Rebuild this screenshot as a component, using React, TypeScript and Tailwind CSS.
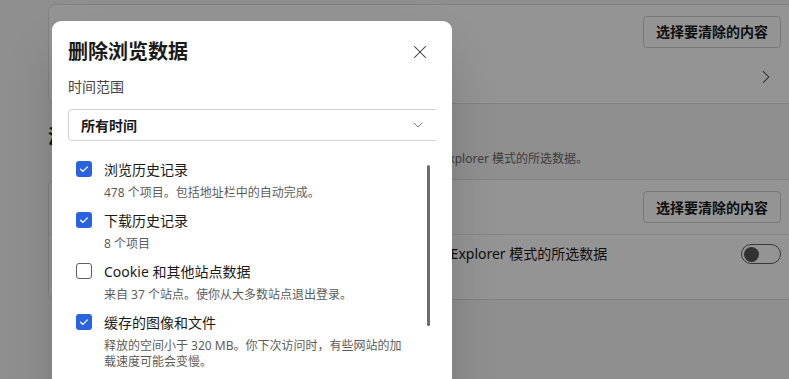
import { X, ChevronDown, ChevronRight } from "lucide-react";

const ITEMS = [
  { label: "浏览历史记录", desc: "478 个项目。包括地址栏中的自动完成。", checked: true },
  { label: "下载历史记录", desc: "8 个项目", checked: true },
  { label: "Cookie 和其他站点数据", desc: "来自 37 个站点。使你从大多数站点退出登录。", checked: false },
  { label: "缓存的图像和文件", desc: "释放的空间小于 320 MB。你下次访问时，有些网站的加载速度可能会变慢。", checked: true },
];

function Checkbox({ checked }: { checked: boolean }) {
  if (!checked) {
    return <div className="w-4 h-4 shrink-0 rounded-[3px] border border-[#5f5f5f] bg-white" />;
  }
  return (
    <div className="w-4 h-4 shrink-0 rounded-[3px] bg-[#2a63e0] flex items-center justify-center">
      <svg width="16" height="16" viewBox="0 0 16 16" fill="none">
        <path d="M4.6 8.3 L6.9 10.4 L11.4 5.9" stroke="white" strokeWidth="1.3" strokeLinecap="round" strokeLinejoin="round" />
      </svg>
    </div>
  );
}

function OutlineButton() {
  return (
    <button className="h-[32px] px-[12px] rounded-[4px] border border-[#d1d1d1] bg-white text-[14px] font-semibold text-[#1a1a1a]">
      选择要清除的内容
    </button>
  );
}

export default function App() {
  return (
    <div className="relative w-[789px] h-[379px] overflow-hidden bg-[#f7f7f7] font-['Noto_Sans','Noto_Sans_CJK_SC',sans-serif] text-[#1a1a1a]">
      {/* Settings page underneath */}
      <div className="pl-[48px] pt-[4px] flex flex-col">
        <div className="w-[753px] rounded-[8px] border border-[#e0e0e0] bg-white flex flex-col">
          <div className="h-[53px] px-[19px] flex items-center justify-between">
            <span className="text-[14px]">立即清除浏览数据</span>
            <OutlineButton />
          </div>
          <div className="h-[45px] pl-[19px] pr-[23px] pb-[7px] flex items-center justify-between">
            <span className="text-[14px]">选择每次关闭浏览器时要清除的内容</span>
            <ChevronRight className="w-[22px] h-[22px] text-[#333]" strokeWidth={1.1} />
          </div>
        </div>

        <div className="mt-[20px] text-[20px] leading-[26px] font-semibold">清除 Internet Explorer 的浏览数据</div>
        <div className="pl-[4px] text-[12px] leading-[18px] text-[#6b6b6b] whitespace-nowrap">
          这将同时清除 Internet Explorer 和 Microsoft Edge 浏览器中的 Internet Explorer 模式的所选数据。
        </div>

        <div className="mt-[11px] w-[753px] rounded-[8px] border border-[#e0e0e0] bg-white flex flex-col">
          <div className="h-[54px] px-[19px] flex items-center justify-between">
            <span className="text-[14px]">立即清除 Internet Explorer 浏览数据</span>
            <OutlineButton />
          </div>
          <div className="h-[65px] px-[19px] pt-[9px] border-t border-[#e8e8e8] flex items-start justify-between">
            <span className="-ml-[2px] text-[14px] leading-[20px] whitespace-nowrap">
              关闭 Microsoft Edge 时，清除 Internet Explorer 和 Internet Explorer 模式的所选数据
            </span>
            <div className="w-[40px] h-[20px] rounded-full border border-[#616161] flex items-center pl-[2px]">
              <div className="w-[15px] h-[15px] rounded-full bg-[#575757]" />
            </div>
          </div>
        </div>
      </div>

      {/* Overlay */}
      <div className="absolute inset-0 bg-black/[0.42]" />

      {/* Dialog */}
      <div className="absolute left-[52px] top-[21px] w-[400px] h-[420px] rounded-[9px] bg-white shadow-2xl pt-[16px]">
        <div className="pl-[16px] pr-[21px] flex items-center justify-between h-[30px]">
          <h2 className="text-[20px] font-bold leading-[30px] text-[#1a1a1a]">删除浏览数据</h2>
          <X className="w-[22px] h-[22px] text-[#333]" strokeWidth={1.15} />
        </div>

        <div className="ml-[16px] w-[368px] overflow-hidden">
          <div className="mt-[10px] text-[14px] leading-[20px] text-[#444]">时间范围</div>
          <div className="mt-[12px] w-[384px] h-[32px] rounded-[4px] border border-[#d1d1d1] flex items-center justify-between pl-[12px] pr-[25px]">
            <span className="text-[14px] font-semibold text-[#1a1a1a]">所有时间</span>
            <ChevronDown className="w-4 h-4 text-[#666]" strokeWidth={1.3} />
          </div>

          <div className="relative mt-[18px] pl-[8px] flex flex-col gap-[9px]">
            {ITEMS.map((item) => (
              <div key={item.label} className="flex flex-col">
                <div className="h-[20px] flex items-center gap-[12px]">
                  <Checkbox checked={item.checked} />
                  <span className="text-[14px] text-[#1a1a1a] whitespace-nowrap">{item.label}</span>
                </div>
                <div className="mt-[6px] ml-[28px] w-[302px] text-[12px] leading-[16px] text-[#5c5c5c]">{item.desc}</div>
              </div>
            ))}
            {/* scrollbar */}
            <div className="absolute left-[359px] top-[6px] w-[3px] h-[161px] rounded-full bg-[#6b6b6b]" />
          </div>
        </div>
      </div>
    </div>
  );
}
